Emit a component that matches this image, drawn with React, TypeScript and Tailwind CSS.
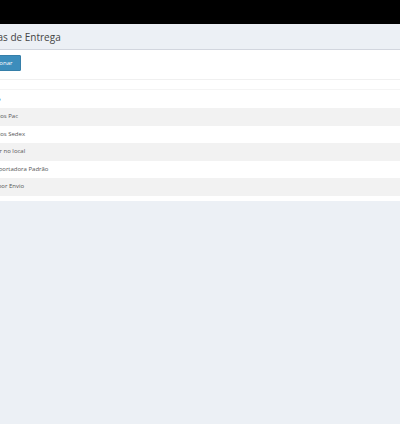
import React from "react";

const rows = [
  "Correios Pac",
  "Correios Sedex",
  "Retirar no local",
  "Transportadora Padrão",
  "Taxa por Envio",
];

const App = () => {
  return (
    <div
      className="w-[400px] h-[424px] overflow-hidden bg-[#ecf0f5] text-[#333]"
      style={{ fontFamily: '"Open Sans", "Liberation Sans", sans-serif' }}
    >
      <div className="h-[24px] bg-black" />
      <div className="h-[26px] border-b border-[#d2d6de] flex items-center -ml-[31px] pl-[4px]">
        <h1 className="text-[10px] leading-none text-[#444]">Formas de Entrega</h1>
      </div>
      <div className="bg-white -ml-[27px] pb-[5px]">
        <div className="pt-[5px] h-[30px] border-b border-[#f0f0f0] flex items-start pl-[4px]">
          <button className="h-[16px] px-[8px] bg-[#3c8dbc] text-white text-[6px] leading-none rounded-[1px] border border-[#367fa9]">
            Adicionar
          </button>
        </div>
        <div className="h-[10px] border-b border-[#f4f4f4]" />
        <table className="w-full border-collapse text-[6px]">
          <thead>
            <tr className="h-[18px]">
              <th className="text-left font-bold pl-[10px] text-[#333]">Título</th>
            </tr>
          </thead>
          <tbody>
            {rows.map((r, i) => (
              <tr
                key={r}
                className={i % 2 === 0 ? "h-[17.5px] bg-[#f2f2f2]" : "h-[17.5px] bg-white"}
              >
                <td className="pl-[10px] text-[#555]">{r}</td>
              </tr>
            ))}
          </tbody>
        </table>
      </div>
    </div>
  );
};

export default App;
